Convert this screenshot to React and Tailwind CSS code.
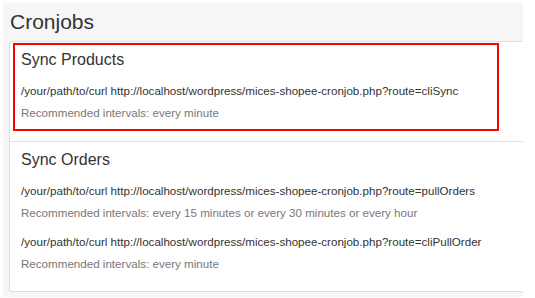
import React from "react";

const jobs = [
  {
    title: "Sync Products",
    highlight: true,
    crons: [
      { route: "cliSync", interval: "every minute" },
    ],
  },
  {
    title: "Sync Orders",
    crons: [
      { route: "pullOrders", interval: "every 15 minutes or every 30 minutes or every hour" },
      { route: "cliPullOrder", interval: "every minute" },
    ],
  },
];

const CronLines = ({ crons }) => (
  <div className="flex flex-col gap-[12px]">
    {crons.map((c) => (
      <div key={c.route}>
        <p className="text-[11.6px] leading-[17px] text-[#333] mb-[5px]">
          /your/path/to/curl http://localhost/wordpress/mices-shopee-cronjob.php?route={c.route}
        </p>
        <p className="text-[11.6px] leading-[17px] text-[#777]">
          Recommended intervals: {c.interval}
        </p>
      </div>
    ))}
  </div>
);

const App = () => {
  return (
    <div
      className="w-[535px] h-[298px] bg-white pl-[3px] pt-[3px] overflow-hidden"
      style={{ fontFamily: '"Liberation Sans", Arial, sans-serif' }}
    >
      <div className="w-[520px] h-[294px] bg-[#f6f6f6] pl-[6px] pt-[7px] pb-[5px] flex flex-col">
        <h2 className="text-[21px] leading-[23px] text-[#333] ml-[1px] mb-[8px]">Cronjobs</h2>

        {/* card */}
        <div className="flex-1 bg-white border-l border-t border-b border-[#dedede] rounded-l-[3px] flex flex-col">
          {/* Sync Products, boxed in red */}
          <div className="pt-[1px] pl-[3px] pb-[10px] border-b border-[#e3e3e3]">
            <div className="w-[486px] border-2 border-[#ff0000] pl-[6px] pt-[4px] pb-[8px]">
              <h4 className="text-[16px] leading-[22px] text-[#333] mb-[11px]">{jobs[0].title}</h4>
              <CronLines crons={jobs[0].crons} />
            </div>
          </div>

          {/* Sync Orders */}
          <div className="pl-[11px] pt-[7px]">
            <h4 className="text-[16px] leading-[22px] text-[#333] mb-[11px]">{jobs[1].title}</h4>
            <CronLines crons={jobs[1].crons} />
          </div>
        </div>
      </div>
    </div>
  );
};

export default App;
